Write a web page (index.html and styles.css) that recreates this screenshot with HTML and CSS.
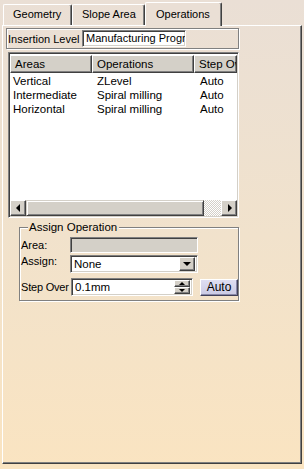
FILE: index.html
```html
<!DOCTYPE html>
<html>
<head>
<meta charset="utf-8">
<link rel="stylesheet" href="styles.css">
</head>
<body>
<div class="tabs">
  <div class="tab tab-geo">Geometry</div>
  <div class="tab tab-slope">Slope Area</div>
  <div class="tab tab-active">Operations</div>
</div>
<div class="panel">
  <div class="insertion">
    <span class="ins-label">Insertion Level</span>
    <div class="field ins-field">Manufacturing Program.1</div>
  </div>
  <div class="listbox">
    <div class="lv-header">
      <div class="hcell c1">Areas</div>
      <div class="hcell c2">Operations</div>
      <div class="hcell c3">Step Over</div>
    </div>
    <div class="lv-rows">
      <div class="lv-row"><span class="c1">Vertical</span><span class="c2">ZLevel</span><span class="c3">Auto</span></div>
      <div class="lv-row"><span class="c1">Intermediate</span><span class="c2">Spiral milling</span><span class="c3">Auto</span></div>
      <div class="lv-row"><span class="c1">Horizontal</span><span class="c2">Spiral milling</span><span class="c3">Auto</span></div>
    </div>
    <div class="hscroll">
      <div class="sbtn"><span class="arr-left"></span></div>
      <div class="thumb"></div>
      <div class="track"></div>
      <div class="sbtn"><span class="arr-right"></span></div>
    </div>
  </div>
  <div class="group">
    <div class="group-title">Assign Operation</div>
    <div class="grow row-area">
      <span class="glabel">Area:</span>
      <div class="field area-field"></div>
    </div>
    <div class="grow row-assign">
      <span class="glabel top">Assign:</span>
      <div class="field combo">
        <span class="combo-text">None</span>
        <div class="sbtn dd"><span class="arr-down"></span></div>
      </div>
    </div>
    <div class="grow row-step">
      <span class="glabel step-label">Step Over</span>
      <div class="field spin">
        <span class="spin-text">0.1mm</span>
        <div class="spinner">
          <div class="sbtn sp"><span class="arr-up"></span></div>
          <div class="sbtn sp"><span class="arr-down"></span></div>
        </div>
      </div>
      <div class="auto-btn">Auto</div>
    </div>
  </div>
</div>
</body>
</html>
```
FILE: styles.css
```css
html, body {
  margin: 0;
  padding: 0;
}
body {
  width: 304px;
  height: 469px;
  overflow: hidden;
  background: linear-gradient(#eadfd5, #f1e2cc 50%, #fae4c1);
  font-family: "Liberation Sans", Arial, sans-serif;
  font-size: 11px;
  color: #000;
}

/* Tabs */
.tabs {
  display: flex;
  align-items: flex-end;
  height: 25px;
  padding-left: 3px;
  box-sizing: border-box;
}
.tab {
  box-sizing: border-box;
  height: 21px;
  line-height: 19px;
  padding-left: 9px;
  border-left: 1px solid #fff;
  border-top: 1px solid #fff;
  border-right: 1px solid #404040;
  box-shadow: inset -1px 0 0 #808080;
  border-radius: 2px 2px 0 0;
  white-space: nowrap;
  font-size: 11px;
}
.tab-geo { width: 69px; }
.tab-slope { width: 73px; }
.tab-active {
  width: 77px;
  height: 24px;
  line-height: 22px;
  padding-left: 10px;
  margin-bottom: -1px;
  position: relative;
  z-index: 1;
  background: #eadfd5;
}

/* Panel */
.panel {
  margin-left: 2px;
  width: 300px;
  height: 439px;
  box-sizing: border-box;
  border-top: 1px solid #fff;
  border-left: 1px solid #fff;
  border-right: 1px solid #404040;
  border-bottom: 1px solid #404040;
  box-shadow: inset -1px -1px 0 #808080;
  padding: 2px 0 0 3px;
}

/* Sunken field */
.field {
  box-sizing: border-box;
  background: #fff;
  border-top: 1px solid #808080;
  border-left: 1px solid #808080;
  border-right: 1px solid #fff;
  border-bottom: 1px solid #fff;
  box-shadow: inset 1px 1px 0 #404040, inset -1px -1px 0 #d4d0c8;
  overflow: hidden;
  white-space: nowrap;
}

/* Insertion level */
.insertion {
  width: 233px;
  height: 21px;
  box-sizing: border-box;
  border: 1px solid #808080;
  box-shadow: inset 1px 1px 0 #fff, 1px 1px 0 #fff;
  display: flex;
  align-items: center;
}
.ins-label {
  padding-left: 1px;
  width: 75px;
  box-sizing: border-box;
  white-space: nowrap;
  font-size: 11px;
  flex: none;
}
.ins-field {
  width: 104px;
  height: 17px;
  line-height: 15px;
  padding-left: 3px;
  font-size: 11px;
}

/* List view */
.listbox {
  margin: 3px 0 0 2px;
  width: 231px;
  height: 166px;
  box-sizing: border-box;
  background: #fff;
  border-top: 1px solid #808080;
  border-left: 1px solid #808080;
  border-right: 1px solid #fff;
  border-bottom: 1px solid #fff;
  box-shadow: inset 1px 1px 0 #404040, inset -1px -1px 0 #d4d0c8;
  padding: 2px 1px 1px 1px;
  display: flex;
  flex-direction: column;
  font-size: 11.5px;
}
.lv-header {
  display: flex;
  height: 18px;
  flex: none;
  overflow: hidden;
}
.hcell {
  box-sizing: border-box;
  height: 18px;
  line-height: 16px;
  background: #d4d0c8;
  border-top: 1px solid #fff;
  border-left: 1px solid #fff;
  border-right: 1px solid #404040;
  border-bottom: 1px solid #404040;
  box-shadow: inset -1px -1px 0 #808080;
  padding-left: 4px;
  white-space: nowrap;
  overflow: hidden;
}
.hcell.c1 { width: 82px; flex: none; }
.hcell.c2 { width: 102px; flex: none; }
.hcell.c3 { flex: 1; min-width: 0; }

.lv-rows {
  flex: 1;
  padding-top: 1px;
}
.lv-row {
  display: flex;
  height: 14px;
  line-height: 14px;
  white-space: nowrap;
}
.lv-row .c1 { width: 82px; padding-left: 3px; box-sizing: border-box; }
.lv-row .c2 { width: 102px; padding-left: 5px; box-sizing: border-box; }
.lv-row .c3 { padding-left: 6px; }

/* Scrollbar */
.hscroll {
  display: flex;
  height: 16px;
  flex: none;
}
.sbtn {
  box-sizing: border-box;
  width: 16px;
  height: 16px;
  flex: none;
  background: #d4d0c8;
  border-top: 1px solid #fff;
  border-left: 1px solid #fff;
  border-right: 1px solid #404040;
  border-bottom: 1px solid #404040;
  box-shadow: inset -1px -1px 0 #808080;
  display: flex;
  align-items: center;
  justify-content: center;
}
.thumb {
  box-sizing: border-box;
  width: 178px;
  height: 16px;
  flex: none;
  background: #d4d0c8;
  border-top: 1px solid #d4d0c8;
  border-left: 1px solid #d4d0c8;
  border-right: 1px solid #404040;
  border-bottom: 1px solid #404040;
  box-shadow: inset 1px 1px 0 #fff, inset -1px -1px 0 #808080;
}
.track {
  flex: 1;
  height: 16px;
  background-color: #fff;
  background-image: repeating-conic-gradient(#d4d0c8 0 25%, #fff 0 50%);
  background-size: 2px 2px;
}
.arr-left {
  width: 0;
  height: 0;
  border-top: 4px solid transparent;
  border-bottom: 4px solid transparent;
  border-right: 4px solid #000;
  margin-right: 1px;
}
.arr-right {
  width: 0;
  height: 0;
  border-top: 4px solid transparent;
  border-bottom: 4px solid transparent;
  border-left: 4px solid #000;
  margin-left: 1px;
}
.arr-down {
  width: 0;
  height: 0;
  border-left: 4px solid transparent;
  border-right: 4px solid transparent;
  border-top: 4px solid #000;
}
.arr-up {
  width: 0;
  height: 0;
  border-left: 4px solid transparent;
  border-right: 4px solid transparent;
  border-bottom: 4px solid #000;
}

/* Group box */
.group {
  margin: 9px 0 0 13px;
  width: 220px;
  box-sizing: border-box;
  border: 1px solid #808080;
  box-shadow: inset 1px 1px 0 #fff, 1px 1px 0 #fff;
  padding: 0 0 4px 0;
  font-size: 11px;
}
.group-title {
  width: fit-content;
  margin: -7px 0 0 8px;
  padding: 0 2px 0 1px;
  line-height: 13px;
  font-size: 11.5px;
  background: #f1e2cc;
  white-space: nowrap;
}
.grow {
  display: flex;
  align-items: center;
}
.glabel {
  width: 50px;
  padding-left: 1px;
  box-sizing: border-box;
  white-space: nowrap;
  flex: none;
}
.glabel.top {
  align-self: flex-start;
  line-height: 13px;
}
.row-area {
  margin-top: 3px;
  height: 16px;
}
.area-field {
  width: 128px;
  height: 16px;
  background: #d4d0c8;
}
.row-assign {
  margin-top: 2px;
  height: 18px;
}
.combo {
  width: 128px;
  height: 18px;
  display: flex;
  align-items: center;
  padding: 2px;
}
.combo-text {
  flex: 1;
  padding-left: 1px;
  font-size: 11.5px;
}
.sbtn.dd {
  width: 16px;
  height: 14px;
}
.row-step {
  margin-top: 5px;
  height: 18px;
}
.step-label {
  width: 51px;
  letter-spacing: -0.2px;
}
.spin {
  width: 122px;
  height: 18px;
  display: flex;
  align-items: center;
  padding: 2px;
}
.spin-text {
  flex: 1;
  padding-left: 1px;
  font-size: 11.5px;
}
.spinner {
  display: flex;
  flex-direction: column;
  width: 16px;
  height: 14px;
}
.sbtn.sp {
  height: 7px;
  width: 16px;
}
.sbtn.sp .arr-up,
.sbtn.sp .arr-down {
  border-left-width: 3px;
  border-right-width: 3px;
}
.sbtn.sp .arr-up { border-bottom-width: 3px; }
.sbtn.sp .arr-down { border-top-width: 3px; }
.auto-btn {
  margin-left: 7px;
  width: 38px;
  height: 17px;
  margin-top: 1px;
  box-sizing: border-box;
  background: linear-gradient(#dedef2, #cacae4);
  border-top: 1px solid #fff;
  border-left: 1px solid #fff;
  border-right: 1px solid #404058;
  border-bottom: 1px solid #404058;
  box-shadow: inset -1px -1px 0 #8888a8;
  text-align: center;
  line-height: 15px;
  font-size: 12px;
}
```
